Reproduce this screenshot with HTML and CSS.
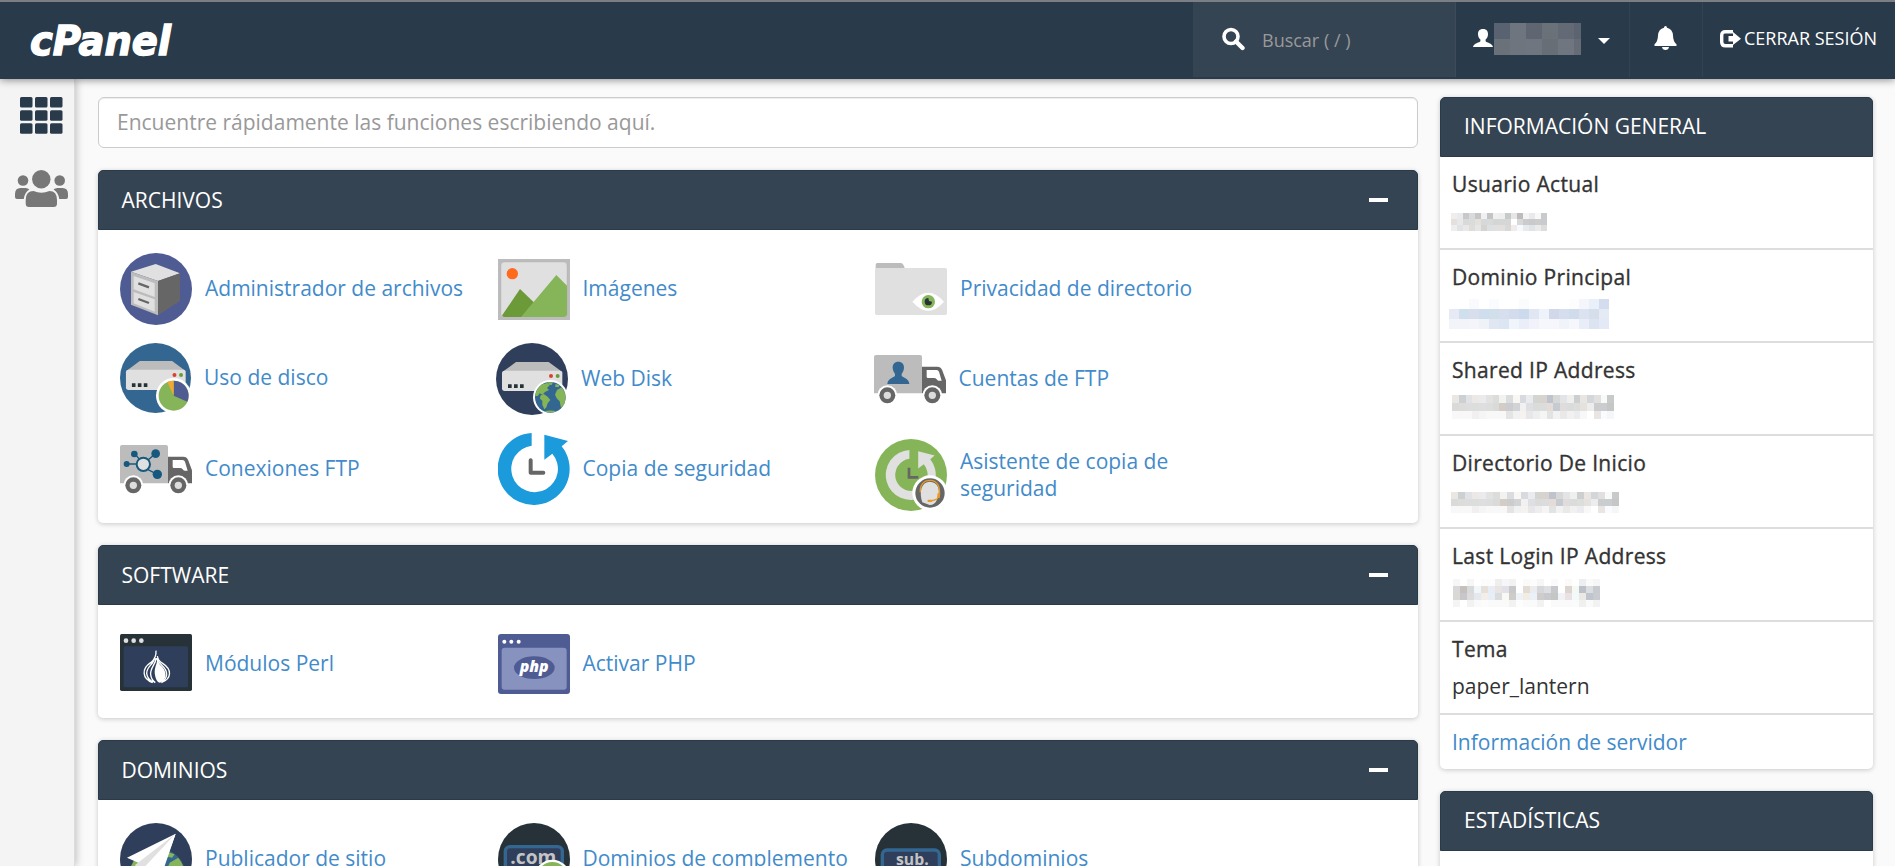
FILE: index.html
```html
<!DOCTYPE html>
<html lang="es">
<head>
<meta charset="utf-8">
<title>cPanel</title>
<link rel="stylesheet" href="styles.css">
</head>
<body>
<svg class="defs" aria-hidden="true">
  <defs>
    <g id="globe">
      <circle r="46" fill="#336791"/>
      <g fill="#85b558">
        <path d="M-44 -12Q-38 -32 -22 -40L-8 -43L-2 -36L-10 -28L-4 -22L-16 -16L-24 -8L-32 -12L-38 -4L-45 -4Z"/>
        <path d="M-8 -45L8 -45L4 -37L-4 -38Z"/>
        <path d="M-30 -5L-20 -10L-8 -2L0 8L-8 18L-12 30L-18 36L-24 22L-24 10L-31 4Z"/>
        <path d="M20 -22L34 -30Q46 -14 46 2L42 20L32 32L28 12L20 4L14 -8Z"/>
        <path d="M-18 42Q0 37 18 42Q0 49 -18 42Z"/>
        <path d="M16 -40L28 -36L24 -30L14 -32Z"/>
      </g>
    </g>
    <g id="restore-arrow"><path d="M101 0A108 108 0 1 0 191 40L210 24L139 5V80L163 62A70 70 0 1 1 101 38Z"/></g>
    <g id="truck">
      <path d="M0 115V6Q0 0 6 0H138Q144 0 144 6V115Z" fill="#bcbcbc"/>
      <path d="M144 35H190Q200 35 204 44L216 76V115H144Z" fill="#666"/>
      <path d="M158 45H188Q193 45 195 50L203 77H194Q190 77 188 73Q185 69 180 69H162Q158 69 158 65Z" fill="#fff"/>
      <g fill="#fff"><circle cx="40" cy="121" r="30"/><circle cx="175" cy="121" r="30"/></g>
      <g fill="#666"><circle cx="40" cy="121" r="24"/><circle cx="175" cy="121" r="24"/></g>
      <g fill="#ddd"><circle cx="40" cy="121" r="11"/><circle cx="175" cy="121" r="11"/></g>
    </g>
    <g id="drive">
      <path d="M18 31L60 0H158L200 31Z" fill="#bcbcbc"/>
      <rect x="18" y="26" width="181" height="61" rx="8" fill="#e0e0e0"/>
      <circle cx="165" cy="42" r="6" fill="#d9412f"/><circle cx="185" cy="42" r="6" fill="#6c9a38"/>
      <path d="M36 67h11v11h-11zM54 67h11v11h-11zM72 67h11v11h-11z" fill="#263238"/>
    </g>
  </defs>
</svg>

<header class="topbar">
  <div class="brand">
    <svg class="logo" viewBox="0 0 160 50" role="img"><text class="logo-text" x="1" y="35" textLength="141" lengthAdjust="spacingAndGlyphs">cPanel</text></svg>
  </div>
  <div class="top-search">
    <svg width="23" height="24" viewBox="0 0 23 24"><circle cx="9" cy="9.5" r="7" fill="none" stroke="#fff" stroke-width="3.6"/><path d="M14 14.5L20.5 21" stroke="#fff" stroke-width="4.4" stroke-linecap="round"/></svg>
    <span>Buscar ( / )</span>
  </div>
  <div class="top-user">
    <svg width="20" height="18" viewBox="0 0 20 18"><path d="M10 0C13.500 0 15.200 2.200 15 5.500C14.900 8.200 13.600 9.600 12.600 10.600V12.200C13.200 13.400 19.500 14.200 20 18H0C.5 14.200 6.800 13.400 7.400 12.200V10.600C6.400 9.600 5.100 8.200 5 5.500C4.800 2.200 6.500 0 10 0Z" fill="#fff"/></svg>
    <span class="mosaic" data-w="16" data-h="16" data-rows="596270 6e757e 5f6671 6a7179 646a75 5b6470|6b7179 6f757e 70767f 686e76 70767f 656c75"></span>
    <svg class="caret" width="12" height="6" viewBox="0 0 12 6"><path d="M0 0H12L6 6Z" fill="#fff"/></svg>
  </div>
  <div class="top-bell">
    <svg width="23" height="24" viewBox="0 0 23 24"><path d="M11.500 0Q13 0 13 1.800Q18.500 3 19 9.500Q19.200 16 22.500 18.200V20H.5V18.200Q3.800 16 4 9.500Q4.500 3 10 1.800Q10 0 11.500 0ZM8 21H15Q14.500 24 11.500 24Q8.500 24 8 21Z" fill="#fff"/></svg>
  </div>
  <div class="top-logout">
    <svg width="21" height="18" viewBox="0 0 21 18"><path d="M13 1.700H5.500Q1.700 1.700 1.700 5.500V12Q1.700 15.800 5.500 15.800H13" fill="none" stroke="#fff" stroke-width="3.400"/><path d="M8.500 6H13V2L21 8.700L13 15V11.500H8.500Z" fill="#fff"/></svg>
    <span>CERRAR SESIÓN</span>
  </div>
</header>

<div class="shell">
  <nav class="rail">
    <svg class="rail-apps" width="43" height="37" viewBox="0 0 43 37" fill="#293a4a"><rect x="0" y="0" width="12.500" height="10.500" rx="1.500"/><rect x="15" y="0" width="12.500" height="10.500" rx="1.500"/><rect x="30" y="0" width="12.500" height="10.500" rx="1.500"/><rect x="0" y="13.200" width="12.500" height="10.500" rx="1.500"/><rect x="15" y="13.200" width="12.500" height="10.500" rx="1.500"/><rect x="30" y="13.200" width="12.500" height="10.500" rx="1.500"/><rect x="0" y="26.300" width="12.500" height="10.500" rx="1.500"/><rect x="15" y="26.300" width="12.500" height="10.500" rx="1.500"/><rect x="30" y="26.300" width="12.500" height="10.500" rx="1.500"/></svg>
    <svg width="53" height="37" viewBox="0 0 53 37" fill="#777"><circle cx="26.300" cy="9.200" r="9.200"/><circle cx="8" cy="10.500" r="5.300"/><circle cx="44.700" cy="10.500" r="5.300"/><path d="M18.500 21Q26.300 24.500 34.500 21Q42 21 42 30V33.500Q42 37 38.500 37H14Q10.700 37 10.700 33.500V30Q10.700 21 18.500 21ZM5.500 18H10.500Q13 18 14.300 19.500Q9.500 22.500 8.800 29H2Q0 29 0 27V24Q0 18 5.500 18ZM47.500 18H42.500Q40 18 38.500 19.500Q43.500 22.500 44.200 29H51Q53 29 53 27V24Q53 18 47.500 18Z"/></svg>
  </nav>

  <main class="content">
    <div class="quick-find">Encuentre rápidamente las funciones escribiendo aquí.</div>

    <section class="panel">
      <h2 class="panel-head">ARCHIVOS<span class="collapse"></span></h2>
      <div class="tiles">
        <a class="tile">
          <svg width="72" height="72" viewBox="0 0 216 216"><circle cx="108" cy="108" r="108" fill="#4f5b93"/><path d="M33 56L107 33L180 61L114 84Z" fill="#e0e0e0"/><path d="M33 56L114 84V187L33 155Z" fill="#bcbcbc"/><path d="M114 84L180 61V144L114 187Z" fill="#666"/><path d="M41 69L104 91V132L41 109ZM41 117L104 139V176L41 151Z" fill="#e0e0e0"/><path d="M55 91L87 103M55 138L87 150" stroke="#666" stroke-width="7"/></svg>
          <span>Administrador de archivos</span>
        </a>
        <a class="tile">
          <svg width="72" height="61" viewBox="0 0 216 183"><path d="M0 0H216V183H0Z" fill="#bcbcbc"/><rect x="9" y="9" width="198" height="166" rx="10" fill="#e0e0e0" stroke="#aaa" stroke-width="1"/><circle cx="43" cy="44" r="17" fill="#ff6a1c"/><path d="M18 174Q11 173 13 168L66 90L112 134L116 174Z" fill="#6c9a38"/><path d="M69 174L175 48L207 80V165Q207 174 198 174Z" fill="#85b558"/></svg>
          <span>Imágenes</span>
        </a>
        <a class="tile">
          <svg width="72" height="52" viewBox="0 0 216 156"><path d="M2 20V5Q2 0 7 0H78Q86 0 90 20Z" fill="#bcbcbc"/><rect y="15" width="216" height="141" rx="5" fill="#e0e0e0"/><path d="M112 116Q160 62 207 116Q160 170 112 116Z" fill="#fff"/><circle cx="160" cy="116" r="20" fill="#85b558"/><path d="M160 105A11 11 0 1 0 171 116L162 114Z" fill="#263238"/></svg>
          <span>Privacidad de directorio</span>
        </a>
        <a class="tile tile-narrow">
          <svg width="71" height="70" viewBox="0 0 213 210"><ellipse cx="106.500" cy="105" rx="106.500" ry="105" fill="#336791"/><use href="#drive" transform="translate(0 54) scale(.99 1)"/><circle cx="161" cy="158" r="53" fill="#fff"/><circle cx="161" cy="158" r="45" fill="#85b558"/><path d="M161 158V113A45 45 0 0 1 202 176Z" fill="#4f5b93"/><path d="M161 158L142 117A45 45 0 0 1 161 113Z" fill="#f0a830"/></svg>
          <span>Uso de disco</span>
        </a>
        <a class="tile tile-left">
          <svg width="72" height="72" viewBox="0 0 216 216"><circle cx="108" cy="108" r="108" fill="#2f3f5b"/><use href="#drive" y="57"/><circle cx="163" cy="163" r="52" fill="#fff"/><use href="#globe" x="163" y="163"/></svg>
          <span>Web Disk</span>
        </a>
        <a class="tile tile-left">
          <svg width="72" height="49" viewBox="0 0 216 147"><use href="#truck"/><path d="M73 20C84 20 91 28 90 39C89 49 85 53 83 57V62C86 68 106 70 106 87H40C40 70 60 68 63 62V57C61 53 57 49 56 39C55 28 62 20 73 20Z" fill="#336791"/></svg>
          <span>Cuentas de FTP</span>
        </a>
        <a class="tile">
          <svg width="72" height="49" viewBox="0 0 216 147"><use href="#truck"/><g stroke="#17597e" stroke-width="4" fill="none"><path d="M20 57H50M43 26L58 42M106 26L84 45M84 74L112 88"/><circle cx="70" cy="58" r="20" fill="#e0e0e0" stroke-width="6"/></g><g fill="#17597e"><circle cx="20" cy="57" r="9"/><circle cx="43" cy="27" r="10"/><circle cx="107" cy="26" r="13"/><circle cx="112" cy="88" r="14"/></g></svg>
          <span>Conexiones FTP</span>
        </a>
        <a class="tile">
          <svg width="72" height="72" viewBox="0 0 216 216"><use href="#restore-arrow" fill="#1b9bdb"/><path d="M98 82V119H136" fill="none" stroke="#666" stroke-width="12" stroke-linecap="round" stroke-linejoin="round"/></svg>
          <span>Copia de seguridad</span>
        </a>
        <a class="tile tile-tall">
          <svg width="72" height="72" viewBox="0 0 216 216"><circle cx="108" cy="108" r="108" fill="#85b558"/><use href="#restore-arrow" transform="translate(33 33) scale(.695)" fill="#e0e0e0"/><path d="M102 86V115H130" fill="none" stroke="#666" stroke-width="8"/><circle cx="165" cy="162" r="53" fill="#fff"/><circle cx="165" cy="162" r="44" fill="#666"/><path d="M142 190C132 160 138 130 163 128C190 128 198 155 187 180Q180 198 164 198Z" fill="#e0e0e0"/><path d="M136 160C134 138 146 124 165 124C186 124 196 142 193 168Q192 182 166 186" fill="none" stroke="#e79a26" stroke-width="4"/><path d="M188 162L196 164L194 178L186 176Z M158 182H170V189H158Z" fill="#e79a26"/></svg>
          <span>Asistente de copia de seguridad</span>
        </a>
      </div>
    </section>

    <section class="panel">
      <h2 class="panel-head">SOFTWARE<span class="collapse"></span></h2>
      <div class="tiles">
        <a class="tile">
          <svg class="perl" width="72" height="57" viewBox="0 0 216 171"><rect width="216" height="171" rx="5" fill="#263238"/><rect x="11" y="37" width="193" height="123" rx="5" fill="#2f3f5b"/><g fill="#e0e0e0"><circle cx="18" cy="20" r="7"/><circle cx="41" cy="20" r="7"/><circle cx="64" cy="20" r="7"/></g><g fill="none" stroke="#fff" stroke-width="4"><path d="M108 50Q110 72 92 86C64 104 66 134 98 146M104 70C102 92 80 96 80 118Q82 136 100 144M108 72C108 92 90 100 92 122Q94 138 106 146M112 66Q114 80 128 88C156 106 156 134 124 146M110 72C114 92 142 98 140 122Q138 136 126 144"/></g><path d="M112 76C110 96 100 104 106 128Q110 144 120 146C136 140 140 124 134 110C128 96 114 92 112 76Z" fill="#fff"/></svg>
          <span>Módulos Perl</span>
        </a>
        <a class="tile">
          <svg width="72" height="60" viewBox="0 0 216 180"><rect width="216" height="180" rx="9" fill="#4f5b93"/><rect x="11" y="41" width="195" height="126" rx="9" fill="#8892bf"/><g fill="#fff"><circle cx="19" cy="23" r="6"/><circle cx="40" cy="23" r="6"/><circle cx="62" cy="23" r="6"/></g><ellipse cx="109" cy="101" rx="61" ry="34" fill="#4f5b93"/><text class="php-mark" x="65" y="114" textLength="87" lengthAdjust="spacingAndGlyphs">php</text></svg>
          <span>Activar PHP</span>
        </a>
      </div>
    </section>

    <section class="panel">
      <h2 class="panel-head">DOMINIOS<span class="collapse"></span></h2>
      <div class="tiles">
        <a class="tile">
          <svg width="72" height="72" viewBox="0 0 216 216"><circle cx="108" cy="108" r="108" fill="#2f3f5b"/><use href="#globe" transform="translate(112 160) scale(1.850)"/><path d="M21 104L167 32L124 150Z" fill="#fff"/><path d="M167 32L45 126L62 150Z" fill="#e0e0e0"/><path d="M167 32L66 140L120 170Z" fill="#fff"/></svg>
          <span>Publicador de sitio</span>
        </a>
        <a class="tile">
          <svg width="72" height="72" viewBox="0 0 216 216"><circle cx="108" cy="108" r="108" fill="#263238"/><rect x="22" y="71" width="171" height="90" rx="14" fill="#2f3f5b" stroke="#336791" stroke-width="10"/><text class="badge-mark" x="37" y="124" textLength="138" lengthAdjust="spacingAndGlyphs">.com</text><circle cx="163" cy="163" r="53" fill="#fff"/><circle cx="163" cy="163" r="46" fill="#85b558"/><path d="M155 132H171V155H194V171H171V194H155V171H132V155H155Z" fill="#fff"/></svg>
          <span>Dominios de complemento</span>
        </a>
        <a class="tile">
          <svg width="72" height="72" viewBox="0 0 216 216"><circle cx="108" cy="108" r="108" fill="#263238"/><rect x="22" y="81" width="171" height="90" rx="14" fill="#2f3f5b" stroke="#336791" stroke-width="10"/><text class="badge-mark sub-mark" x="63" y="126" textLength="98" lengthAdjust="spacingAndGlyphs">sub.</text></svg>
          <span>Subdominios</span>
        </a>
      </div>
    </section>
  </main>

  <aside class="side">
    <section class="panel">
      <h2 class="panel-head">INFORMACIÓN GENERAL</h2>
      <dl class="facts">
        <div class="fact"><dt>Usuario Actual</dt><dd class="m-user"><span class="mosaic" data-w="6" data-h="6" data-rows="eee e8eaec c8c8c8 d8dade c6c6c6 f0f0f2 c4c4c4 f0f0f2 eee c6caca e6e6e6 bcbcbc f4f4f2 e8e9eb f8f8f6 c8cace|e4e0de e8e8e8 d8dada dadcdc e4e0dc d6d8da d8dada d4d6d6 d6d6d6 d6d6d6 fff d6d8da cccaca c8c9cd ccc c8cace|eee e0e2e6 e8e8e8 e0dcd8 e4e6e8 d6d4d0 dde0e0 e0e0e0 e4dede d8d8d8 f0eceb f6faff e8eaec e0e4e8 eaeaea dcdedd"></span></dd></div>
        <div class="fact"><dt>Dominio Principal</dt><dd class="m-domain"><span class="mosaic" data-w="10" data-h="10" data-rows="fff fff f9fafd fff f9fbfe fff fff f9fbfd fff fff fff fff fdfdfe f4f6fb eaf0f9 d4dded|e7eaf4 d0dfee d8deec cfdeee d1dfeb d7dfee d3dced cbdbed e1e7f2 edf2fb d0d8e9 d5deef d0dbec dbe2f0 d6ddeb e4ebf5|f3f4fa f3f4fa f3f5fa eff3f8 e0e6f2 dce5f2 f0f4fb e9eef8 f2f3fa f5f7fd f5f7fd f0f4fa f5f7fd e9edf7 dce4f2 e3eaf6"></span></dd></div>
        <div class="fact"><dt>Shared IP Address</dt><dd class="m-ip"><span class="mosaic" data-w="6.75" data-h="8" data-rows="eae6e1 cdd0d2 e0e2e5 ece8e5 ebebed e2e2e0 dcdddb f1f3f1 dcdcde f9f7f4 d8dadf e9ebef d4d4d1 d9d3d0 bec3cd d7d8d6 e2e4e8 efefed cccecf e9e5e0 d4d7d9 e1e0df f7faf8 c8caca|dadada dcdddb dddddd dcdede dedede dcdede d9dad9 d4cdc5 cacccf d2d3d5 f1f1f1 dedfe2 dadcdc dcdcdc e4dcd7 c5cbd1 e1dcdc d9dcda dcdedc e5e1de ededed cacccd cacccf c5c7c6|f8f8f8 f8f8f8 f8f8f8 f1f0f0 f5f5f5 f8f8f8 f8f8f8 f8f8f8 e6e4e3 f0f1f3 f6f2f0 e7e7ea eee f5f5f5 e2e3e3 f3f2f2 e9e9e9 f3f1f0 ebecef f8f8f8 fff e8e5e2 f9fbfe f5f6f8"></span></dd></div>
        <div class="fact"><dt>Directorio De Inicio</dt><dd class="m-home"><span class="mosaic" data-w="7" data-h="7" data-rows="eae6e1 cdd0d2 e0e2e5 ece8e5 ebebed e2e2e0 dcdddb f1f3f1 dcdcde f9f7f4 d8dadf e9ebef d4d4d1 d9d3d0 bec3cd d7d8d6 e2e4e8 efefed cccecf e9e5e0 d4d7d9 e1e0df f7faf8 c8caca|dadada dcdddb dddddd dcdede dedede dcdede d9dad9 d4cdc5 cacccf d2d3d5 f1f1f1 dedfe2 dadcdc dcdcdc e4dcd7 c5cbd1 e1dcdc d9dcda dcdedc e5e1de ededed cacccd cacccf c5c7c6|f8f8f8 f8f8f8 f8f8f8 f1f0f0 f5f5f5 f8f8f8 f8f8f8 f8f8f8 e6e4e3 f0f1f3 f6f2f0 e7e7ea eee f5f5f5 e2e3e3 f3f2f2 e9e9e9 f3f1f0 ebecef f8f8f8 fff e8e5e2 f9fbfe f5f6f8"></span></dd></div>
        <div class="fact"><dt>Last Login IP Address</dt><dd class="m-login"><span class="mosaic" data-w="7" data-h="7" data-rows="f6f6f8 fff f6f6f6 fff fcfcfc fcfcfc eee f6f6f8 f2f2f2 fff fcfaf8 fcfcfc f6f6f6 fff fafafa fff fcfaf8 fff eceef0 fafafa f4f6f8|d8d8d8 c5c0be d8dada f1f6fb e5e0da e8edf5 e9e4e2 e0e1e8 c8c8ca fff e2dcd5 ececef d5d7db dedfe2 c7c8cc fff dcd4d0 f4f9f4 bcc0c8 dcdde0 c7cbd0|dad8d5 c8c6c8 dcdcdc e5e8ef f3eee9 e8eef6 dadbdd f8f8f5 ceccca ecf2f6 f1ece4 ebf1fb d0ccca c8c9cc c4c6c6 f0f2f5 eae2e2 f1f9fb ebe9e4 c0c4cd c8ccd0|f4f4f4 fff f2f2f2 fafafa fcfcfc fafafa fafafa fafaf8 f2f2f2 fdfdfd fafafa fafafa f2f2f2 fff fafafa fafafa fafafa fafcfc f0f0f0 fafafa f2f2f2"></span></dd></div>
        <div class="fact"><dt>Tema</dt><dd>paper_lantern</dd></div>
        <div class="fact"><a>Información de servidor</a></div>
      </dl>
    </section>
    <section class="panel">
      <h2 class="panel-head">ESTADÍSTICAS</h2>
      <div class="stats"></div>
    </section>
  </aside>
</div>
<script src="script.js"></script>
</body>
</html>
```
FILE: styles.css
```css
* { box-sizing: border-box; }
html, body { height: 100%; }
html { overflow: hidden; }
body {
  margin: 0;
  height: 866px;
  overflow: hidden;
  display: flex;
  flex-direction: column;
  background: #fafafa;
  color: #333;
  font: 400 21px/30px "Open Sans", "Noto Sans", sans-serif;
}
svg { display: block; flex: none; }
.defs { position: absolute; width: 0; height: 0; }

/* Top bar */
.topbar {
  position: relative;
  z-index: 2;
  flex: none;
  display: flex;
  height: 79px;
  padding-bottom: 2px;
  border-top: 2px solid #7b7e83;
  background: #293a4a;
  box-shadow: 0 1px 8px rgba(0, 0, 0, .45);
  color: #fff;
}
.brand { flex: 1; padding: 18px 0 0 29px; }
.logo { width: 160px; height: 50px; overflow: visible; }
.logo-text { font: italic 700 40px "DejaVu Sans", sans-serif; fill: #fff; stroke: #fff; stroke-width: 1.4px; }
.top-search {
  display: flex;
  gap: 17px;
  width: 263px;
  padding: 25px 0 0 29px;
  background: #354453;
  border-right: 1px solid #3d4b59;
  color: #999;
  font-size: 18px;
}
.top-search span { line-height: 26px; }
.top-user { display: flex; width: 174px; padding: 21px 0 0 17px; border-right: 1px solid #334353; }
.top-user > svg { margin-top: 6px; }
.top-user .mosaic { width: 87px; overflow: hidden; margin-left: 1px; }
.top-user .caret { margin: 15px 0 0 17px; }
.top-bell { width: 73px; padding: 24px 0 0 24px; border-right: 1px solid #334353; }
.top-logout { display: flex; gap: 3px; width: 192px; padding: 26px 0 0 17px; font-size: 18px; line-height: 20px; white-space: nowrap; }
.top-logout svg { margin-top: 2px; }

/* Page shell */
.shell { flex: 1; min-height: 0; display: flex; align-items: stretch; overflow: hidden; }
.rail {
  flex: none;
  display: flex;
  flex-direction: column;
  gap: 36px;
  width: 75px;
  padding: 18px 0 0 15px;
  background: #f4f4f4;
  border-right: 1px solid #ddd;
  box-shadow: 1px 0 8px rgba(0, 0, 0, .25);
}
.rail-apps { margin-left: 5px; }
.content, .side { display: flex; flex-direction: column; gap: 22px; padding-top: 18px; }
.content { width: 1320px; margin-left: 23px; flex: none; }
.side { width: 433px; margin-left: 22px; flex: none; }
.quick-find {
  flex: none;
  height: 51px;
  padding-left: 18px;
  border: 1px solid #ccc;
  border-radius: 6px;
  background: #fff;
  box-shadow: inset 0 1px 1px rgba(0, 0, 0, .075);
  color: #999;
  line-height: 49px;
}

/* Panels */
.panel { flex: none; border-radius: 5px; background: #fff; box-shadow: 0 1px 5px rgba(0, 0, 0, .2); }
.panel-head {
  display: flex;
  align-items: center;
  justify-content: space-between;
  height: 60px;
  margin: 0;
  padding: 0 29px 0 22.5px;
  border: 1px solid #293a4a;
  border-radius: 5px 5px 0 0;
  background: #354453;
  color: #fff;
  font-size: 21px;
  font-weight: 400;
  line-height: 58px;
}
.side .panel-head { padding-left: 23px; line-height: 57px; padding-bottom: 1px; }
.collapse { width: 19px; height: 4px; background: #fff; }
.tiles {
  display: grid;
  grid-template-columns: repeat(3, 377.5px);
  grid-auto-rows: 90px;
  padding: 14px 0 9px 22px;
}
.tile { display: flex; align-items: center; gap: 13px; color: #428bca; line-height: 27px; }
.tile span { max-width: 270px; padding-bottom: 2px; }
.tile-narrow { padding-bottom: 2px; }
.tile-left { margin-left: -1.5px; }
.tile-tall { padding-top: 12px; }
.tile-tall span { max-width: 240px; padding-bottom: 0; }
.perl { margin-bottom: 3px; }
.php-mark { font: italic 800 48px "Open Sans", sans-serif; fill: #fff; }
.badge-mark { font: 700 56px "Open Sans", sans-serif; fill: #c4c4c4; }
.sub-mark { font-size: 48px; }

/* General information */
.facts { margin: 0; }
.fact { padding: 12px; border-bottom: 2px solid #ddd; }
.fact:last-child { border-bottom: 0; }
.fact dt { margin-bottom: 7px; letter-spacing: .33px; -webkit-text-stroke: .35px #333; }
.fact dd { height: 30px; margin: 0; }
.fact a { display: block; color: #428bca; }
.m-user .mosaic { margin: 7px 0 0 -1px; }
.m-domain .mosaic { margin: 0 0 0 -3px; }
.m-ip .mosaic { margin: 3px 0 0 0; }
.m-home .mosaic { margin: 7px 0 0 -1px; }
.m-login .mosaic { margin: 1px 0 0 1px; }
.stats { height: 120px; }

/* Masked values */
.mosaic { display: block; }
.fact .mosaic { float: left; }
.mosaic-row { display: flex; }
.mosaic-cell { flex: none; }
```
FILE: script.js
```js
// Builds the masked value blocks from their rows of cell colours.
document.querySelectorAll('.mosaic').forEach(function (el) {
  el.dataset.rows.split('|').forEach(function (row) {
    var line = document.createElement('span');
    line.className = 'mosaic-row';
    row.split(' ').forEach(function (colour) {
      var cell = document.createElement('span');
      cell.className = 'mosaic-cell';
      cell.style.width = el.dataset.w + 'px';
      cell.style.height = el.dataset.h + 'px';
      cell.style.background = '#' + colour;
      line.appendChild(cell);
    });
    el.appendChild(line);
  });
});
```
